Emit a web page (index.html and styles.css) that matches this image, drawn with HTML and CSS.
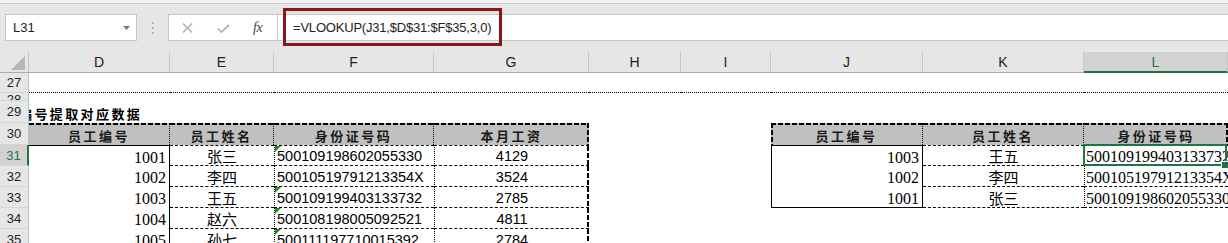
FILE: index.html
```html
<!DOCTYPE html>
<html lang="zh-CN">
<head>
    <meta charset="UTF-8">
    <title>VLOOKUP</title>
    <link rel="stylesheet" href="styles.css">
</head>
<body>
    <div class="topline"></div>

    <!-- formula bar -->
    <div class="fbar">
        <div class="namebox">
            <span>L31</span>
            <svg class="caret" width="7" height="4" viewBox="0 0 7 4"><path d="M0 0h7L3.5 4z" fill="#7c7c7c"/></svg>
        </div>
        <div class="grip">
            <svg width="2" height="12" viewBox="0 0 2 12" fill="#b4b4b4"><rect y="0" width="2" height="2"/><rect y="5" width="2" height="2"/><rect y="10" width="2" height="2"/></svg>
        </div>
        <div class="fbtns">
            <svg class="ico-x" width="11" height="10" viewBox="0 0 11 10"><path d="M1 0.5l9 9M10 0.5l-9 9" stroke="#ababab" stroke-width="1.3" fill="none"/></svg>
            <svg class="ico-ok" width="13" height="9" viewBox="0 0 13 9"><path d="M0.8 4.5l3.6 3.6L12.2 0.8" stroke="#b0b0b0" stroke-width="1.7" fill="none"/></svg>
            <span class="fx">fx</span>
        </div>
        <div class="finput">=VLOOKUP(J31,$D$31:$F$35,3,0)</div>
        <div class="hilite"></div>
    </div>

    <!-- column headers -->
    <div class="row colhead">
        <div class="corner"><svg width="14" height="14" viewBox="0 0 14 14"><path d="M14 0v14H0z" fill="#b6b6b6"/></svg></div>
        <div class="ch">D</div>
        <div class="ch">E</div>
        <div class="ch">F</div>
        <div class="ch">G</div>
        <div class="ch">H</div>
        <div class="ch">I</div>
        <div class="ch">J</div>
        <div class="ch">K</div>
        <div class="ch sel">L</div>
    </div>

    <div class="row r27">
        <div class="rh">27</div>
        <div class="c"></div><div class="c"></div><div class="c"></div><div class="c"></div>
        <div class="c"></div><div class="c"></div><div class="c"></div><div class="c"></div><div class="c"></div>
    </div>

    <div class="row r28">
        <div class="rh"><span class="clip">28</span></div>
        <div class="c"></div><div class="c"></div><div class="c"></div><div class="c"></div>
        <div class="c"></div><div class="c"></div><div class="c"></div><div class="c"></div><div class="c"></div>
    </div>

    <div class="row r29">
        <div class="rh">29</div>
        <div class="c title">编号提取对应数据</div>
        <div class="c"></div><div class="c"></div><div class="c"></div>
        <div class="c"></div><div class="c"></div><div class="c"></div><div class="c"></div><div class="c"></div>
    </div>

    <div class="row r30">
        <div class="rh">30</div>
        <div class="c hd tk-top dot-r">员工编号</div>
        <div class="c hd tk-top dot-r">员工姓名</div>
        <div class="c hd tk-top dot-r">身份证号码</div>
        <div class="c hd tk-top tk-right">本月工资</div>
        <div class="c"></div>
        <div class="c"></div>
        <div class="c hd tk-top tk-left dot-r">员工编号</div>
        <div class="c hd tk-top dot-r">员工姓名</div>
        <div class="c hd tk-top tk-right">身份证号码</div>
    </div>

    <div class="row">
        <div class="rh sel">31</div>
        <div class="c num sol-r sol-t">1001</div>
        <div class="c name dash-b dash-t">张三</div>
        <div class="c id dot-l dash-b dash-t flag">500109198602055330</div>
        <div class="c pay dot-l dash-b dash-t tk-right">4129</div>
        <div class="c"></div>
        <div class="c"></div>
        <div class="c num sol-l sol-r sol-t">1003</div>
        <div class="c name dash-b dash-t">王五</div>
        <div class="c num-l dot-l dash-b dash-t cur">500109199403133732</div>
    </div>

    <div class="row">
        <div class="rh">32</div>
        <div class="c num sol-r">1002</div>
        <div class="c name dash-b">李四</div>
        <div class="c id dot-l dash-b">50010519791213354X</div>
        <div class="c pay dot-l dash-b tk-right">3524</div>
        <div class="c"></div>
        <div class="c"></div>
        <div class="c num sol-l sol-r">1002</div>
        <div class="c name dash-b">李四</div>
        <div class="c num-l dot-l dash-b">50010519791213354X</div>
    </div>

    <div class="row">
        <div class="rh">33</div>
        <div class="c num sol-r">1003</div>
        <div class="c name dash-b">王五</div>
        <div class="c id dot-l dash-b flag">500109199403133732</div>
        <div class="c pay dot-l dash-b tk-right">2785</div>
        <div class="c"></div>
        <div class="c"></div>
        <div class="c num sol-l sol-r sol-b">1001</div>
        <div class="c name dash-b">张三</div>
        <div class="c num-l dot-l dash-b">500109198602055330</div>
    </div>

    <div class="row">
        <div class="rh">34</div>
        <div class="c num sol-r">1004</div>
        <div class="c name dash-b">赵六</div>
        <div class="c id dot-l dash-b flag">500108198005092521</div>
        <div class="c pay dot-l dash-b tk-right">4811</div>
        <div class="c"></div><div class="c"></div><div class="c"></div><div class="c"></div><div class="c"></div>
    </div>

    <div class="row">
        <div class="rh">35</div>
        <div class="c num sol-r">1005</div>
        <div class="c name dash-b">孙七</div>
        <div class="c id dot-l dash-b flag">500111197710015392</div>
        <div class="c pay dot-l dash-b tk-right">2784</div>
        <div class="c"></div><div class="c"></div><div class="c"></div><div class="c"></div><div class="c"></div>
    </div>
</body>
</html>
```

FILE: styles.css
```css
* {
    box-sizing: border-box;
}

body {
    margin: 0;
    width: 1228px;
    height: 243px;
    overflow: hidden;
    background-color: #ffffff;
    font-family: "Liberation Sans", Arial, sans-serif;
    color: #000000;
}

.topline {
    height: 4px;
    background-color: #f3f3f3;
    border-bottom: 1px solid #c8c8c8;
}

/* formula bar */
.fbar {
    position: relative;
    height: 48px;
    background-color: #e6e6e6;
    display: flex;
    align-items: flex-start;
    padding: 10px 0 0 5px;
}

.namebox {
    width: 132px;
    height: 27px;
    background-color: #ffffff;
    border: 1px solid #c6c6c6;
    display: flex;
    align-items: center;
    padding-left: 7px;
    font-size: 13px;
    color: #222222;
}

.namebox .caret {
    margin-left: auto;
    margin-right: 6px;
}

.grip {
    width: 31px;
    height: 27px;
    display: flex;
    align-items: center;
    justify-content: center;
}

.fbtns {
    width: 110px;
    height: 27px;
    background-color: #ffffff;
    border: 1px solid #c6c6c6;
    display: flex;
    align-items: center;
    padding-left: 13px;
}

.ico-ok {
    margin-left: 24px;
    margin-top: 2px;
}

.fx {
    margin-left: 23px;
    font-family: "Liberation Serif", serif;
    font-style: italic;
    font-size: 14px;
    color: #444444;
    letter-spacing: -0.5px;
}

.finput {
    flex: 1;
    height: 27px;
    background-color: #ffffff;
    border-top: 1px solid #c6c6c6;
    border-bottom: 1px solid #c6c6c6;
    display: flex;
    align-items: center;
    padding-left: 15px;
    font-size: 13px;
    letter-spacing: -0.2px;
    color: #222222;
}

.hilite {
    position: absolute;
    left: 283px;
    top: 4px;
    width: 219px;
    height: 38px;
    border: 3px solid #8b1616;
}

/* grid */
.row {
    display: grid;
    grid-template-columns: 29px 141px 104px 160px 155px 92px 90px 152px 161px 144px;
    height: 21px;
}

.colhead {
    background-color: #e6e6e6;
    border-bottom: 1px solid #ababab;
}

.corner {
    display: flex;
    align-items: flex-end;
    justify-content: flex-end;
    padding: 0 3px 2px 0;
    border-right: 1px solid #c6c6c6;
}

.ch {
    display: flex;
    align-items: center;
    justify-content: center;
    border-right: 1px solid #c6c6c6;
    font-size: 14px;
    color: #222222;
}

.ch.sel {
    background-color: #d2d2d2;
    color: #217346;
    border-bottom: 2px solid #217346;
    margin-bottom: -1px;
}

.rh {
    position: relative;
    z-index: 1;
    background-color: #e6e6e6;
    border-right: 1px solid #c0c0c0;
    border-bottom: 1px solid #d4d4d4;
    display: flex;
    align-items: center;
    justify-content: center;
    font-size: 13px;
    color: #222222;
}

.rh.sel {
    background-color: #d2d2d2;
    color: #217346;
    border-right: 2px solid #217346;
}

.r27 {
    height: 20px;
}

.r27 .c {
    border-bottom: 1px dotted #000000;
}

.r28 {
    height: 8px;
}

.r28 .rh {
    overflow: hidden;
    align-items: flex-start;
}

.r28 .clip {
    margin-top: -1px;
}

.r29,
.r30 {
    height: 22px;
}

/* cells */
.c {
    position: relative;
    display: flex;
    align-items: center;
    padding: 0 3px;
    line-height: 1;
    white-space: nowrap;
    background-image: var(--bt, none), var(--br, none), var(--bl, none);
    background-size: 100% 2px, 2px 100%, 2px 100%;
    background-position: left top, right top, left top;
    background-repeat: no-repeat;
}

.tk-top {
    --bt: repeating-linear-gradient(90deg, #000 0 5px, transparent 5px 7px);
}

.tk-right {
    --br: repeating-linear-gradient(180deg, #000 0 5px, transparent 5px 7px);
}

.tk-left {
    --bl: repeating-linear-gradient(180deg, #000 0 5px, transparent 5px 7px);
}

.title {
    font-family: "Noto Sans CJK SC", sans-serif;
    font-weight: 700;
    font-size: 13px;
    letter-spacing: 2.4px;
    text-indent: -10px;
    padding: 0;
    align-items: flex-end;
    padding-bottom: 3px;
}

.hd {
    background-color: #c0c0c0;
    justify-content: center;
    font-family: "Noto Sans CJK SC", sans-serif;
    font-weight: 700;
    font-size: 13px;
    letter-spacing: 2.5px;
    color: #1a1a1a;
    padding-top: 2px;
}

.num {
    justify-content: flex-end;
    font-family: "Liberation Serif", serif;
    font-size: 16px;
    padding-top: 3px;
}

.num-l {
    font-family: "Liberation Serif", serif;
    font-size: 16px;
    padding: 3px 0 0 1px;
    overflow: hidden;
}

.name {
    justify-content: center;
    font-family: "Noto Sans CJK SC", sans-serif;
    font-size: 15px;
}

.id {
    font-size: 14.5px;
    padding: 2px 0 0 2px;
}

.pay {
    justify-content: center;
    font-size: 14.5px;
    padding-top: 2px;
}

.sol-t { border-top: 1px solid #000; }
.sol-r { border-right: 1px solid #000; }
.sol-l { border-left: 1px solid #000; }
.sol-b { border-bottom: 1px solid #000; }
.dash-t { border-top: 1px dashed #000; }
.dash-b { border-bottom: 1px dashed #000; }
.dot-l { border-left: 1px dotted #000; }
.dot-r { border-right: 1px dotted #000; }

/* number stored as text marker */
.flag::before {
    content: "";
    position: absolute;
    left: 0;
    top: 0;
    border-top: 6px solid #1f8a1f;
    border-right: 6px solid transparent;
}

/* active cell */
.cur {
    overflow: visible;
}

.cur::before {
    content: "";
    position: absolute;
    left: -2px;
    top: -2px;
    right: 1px;
    bottom: -1px;
    border: 2px solid #217346;
}

.cur::after {
    content: "";
    position: absolute;
    right: -1px;
    bottom: -4px;
    width: 6px;
    height: 6px;
    background-color: #217346;
    border: 1px solid #ffffff;
}
```
